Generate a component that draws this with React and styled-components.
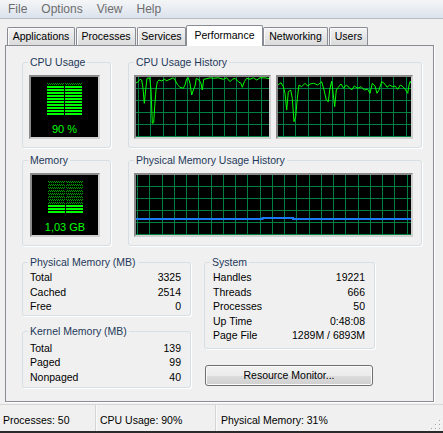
import React from 'react';
import styled, { createGlobalStyle } from 'styled-components';

const GlobalStyle = createGlobalStyle`
  html, body {
    margin: 0;
    padding: 0;
    background: #f0f0f0;
  }
  body {
    font-family: "Liberation Sans", Arial, sans-serif;
    font-size: 10.5px;
    color: #000;
  }
`;

const Window = styled.div`
  width: 443px;
  height: 433px;
  overflow: hidden;
  display: flex;
  flex-direction: column;
  background: #f0f0f0;
  position: relative;
`;

const MenuBar = styled.div`
  height: 18px;
  border-bottom: 1px solid #b6bcc6;
  background: linear-gradient(#f4f5f7, #e8ecf2 55%, #dae2ed);
  display: flex;
  align-items: center;
  padding-left: 1px;
  font-size: 12px;
  color: #6d6d6d;
`;

const MenuItem = styled.span`
  padding: 0 7px;
  line-height: 18px;
`;

const TabStrip = styled.div`
  display: flex;
  align-items: flex-end;
  gap: 1px;
  height: 21px;
  margin-top: 6px;
  padding-left: 7px;
`;

const Tab = styled.div`
  box-sizing: border-box;
  width: ${(p) => p.$w}px;
  height: ${(p) => (p.$active ? 21 : 19)}px;
  margin: 0 ${(p) => (p.$active ? -1 : 0)}px;
  padding-top: ${(p) => (p.$active ? 3 : 2)}px;
  border: 1px solid #898c95;
  border-bottom: none;
  border-radius: 2px 2px 0 0;
  background: ${(p) => (p.$active ? '#fff' : 'linear-gradient(#f3f3f3, #e6e6e6 50%, #dadada)')};
  box-shadow: ${(p) => (p.$active ? 'none' : 'inset 1px 1px 0 #fbfbfb')};
  text-align: center;
  line-height: 13px;
  white-space: nowrap;
  position: ${(p) => (p.$active ? 'relative' : 'static')};
  z-index: ${(p) => (p.$active ? 1 : 'auto')};
`;

const Panel = styled.div`
  box-sizing: border-box;
  width: 429px;
  height: 357px;
  margin: -1px 0 0 5px;
  padding: 9px 11px 0 16px;
  border: 1px solid #898c95;
  box-shadow: 1px 1px 0 #fff;
  background: #f0f0f0;
  display: flex;
  flex-direction: column;
`;

const GraphRow = styled.div`
  display: grid;
  grid-template-columns: 89px 294px;
  column-gap: 17px;
  margin-top: ${(p) => p.$mt || 0}px;
`;

const BottomGrid = styled.div`
  display: grid;
  grid-template-columns: 169px 171px;
  column-gap: 13px;
  align-items: start;
  margin-top: 9px;
`;

const Column = styled.div`
  display: flex;
  flex-direction: column;
  gap: ${(p) => p.$gap || 0}px;
`;

const Group = styled.fieldset`
  margin: 0;
  padding: 0;
  min-width: 0;
  box-sizing: border-box;
  border: 1px solid #d5dfe5;
  border-radius: 3px;
  box-shadow: 1px 1px 0 #fff;
`;

const Caption = styled.legend`
  margin-left: 5px;
  padding: 0 2px;
  line-height: 15px;
  color: #1e395b;
`;

const Content = styled.div`
  padding: ${(p) => p.$pad};
  display: flex;
  flex-direction: ${(p) => (p.$column ? 'column' : 'row')};
  gap: ${(p) => p.$gap || 0}px;
`;

const MeterBox = styled.div`
  width: 71px;
  height: 64px;
  box-sizing: border-box;
  background: #000;
  border: 2px solid;
  border-color: #8a8a8a #d0d0d0 #d0d0d0 #8a8a8a;
  display: flex;
  flex-direction: column;
  align-items: center;
`;

const MeterBars = styled.svg`
  display: block;
  margin-top: 6px;
`;

const MeterText = styled.div`
  margin-top: 7px;
  color: #00ff00;
  font-size: 11px;
  line-height: 13px;
  white-space: nowrap;
`;

const GraphBox = styled.div`
  width: ${(p) => p.$w}px;
  height: 64px;
  box-sizing: border-box;
  background: #000;
  border: 2px solid;
  border-color: #8a8a8a #d0d0d0 #d0d0d0 #8a8a8a;
  svg {
    display: block;
  }
`;

const Row = styled.div`
  display: flex;
  justify-content: space-between;
  height: 14.6px;
  line-height: 14.6px;
  white-space: nowrap;
`;

const ActionButton = styled.button`
  margin: 16px 0 0 1px;
  width: 168px;
  height: 21px;
  box-sizing: border-box;
  padding: 0;
  border: 1px solid #707070;
  border-radius: 3px;
  background: linear-gradient(#f2f2f2, #ebebeb 50%, #dddddd 51%, #cfcfcf);
  box-shadow: inset 0 0 0 1px #fbfbfb;
  font-family: inherit;
  font-size: 10.5px;
  color: #000;
`;

const StatusBar = styled.div`
  margin-top: 2px;
  height: 29px;
  box-sizing: border-box;
  border-top: 1px solid #d7d7d7;
  border-bottom: 2px solid #2a2a2a;
  display: flex;
  position: relative;
  background: #f0f0f0;
`;

const StatusCell = styled.div`
  width: ${(p) => (p.$w ? `${p.$w}px` : 'auto')};
  flex: ${(p) => (p.$w ? 'none' : '1')};
  padding: 9px 0 0 ${(p) => p.$pl}px;
  line-height: 13px;
  box-sizing: border-box;
  border-left: ${(p) => (p.$sep ? '1px solid #d5d5d5' : 'none')};
  box-shadow: ${(p) => (p.$sep ? 'inset 1px 0 0 #fafafa' : 'none')};
  white-space: nowrap;
`;

const Grip = styled.svg`
  position: absolute;
  right: 2px;
  bottom: 1px;
`;

const cpu1 =
  '0,6 2.3,4.7 4,2.3 5.7,3 7,11.3 8.3,26.3 9.7,13 11,1.3 13.7,0.8 15,13 16.3,46.3 17.7,45.7 18.7,29.7 20,13 21.3,4.7 23,3 25.7,4 28.3,2.3 30.7,3.7 34,2.3 37.3,0.8 39,3 41.7,8 44,10.3 47.3,11.3 49,8 50.7,1.7 52.3,0.8 54,6.3 55.7,18 57.3,13 59,9 60.3,1.3 63,3 65,6.3 66.3,13 67.7,2.3 70.7,1.7 74,0.8 77.3,1.3 82.3,0.8 87.3,2.3 90.7,0.8 94,4.7 96.3,2.3 99,1.3 102.3,4.7 105,6.3 106.3,10.3 108.3,4.7 110.7,1.3 114,2.3 117.3,0.8 120.7,3 124,0.8 129,0.8 133,1.7';

const cpu2 =
  '0,8 3,5.7 5.3,9.7 7,16.3 8.7,33 10.3,14.7 12.7,13 14.3,21.3 16,44.7 17.7,39.7 19.3,21.3 21,8 23.7,9.7 27,6.3 29.7,9 32.3,7 35.7,6.3 39.7,8 43.7,4.7 46,13 48.3,23 50.3,24.7 51.7,13 53.7,4.3 55.3,18 56.7,29.7 58.3,13 60.3,10.3 63,7 65.7,11.3 68.3,8 71,10.3 73.7,13 76.3,9 79.7,11.3 83,9.7 86.3,13 89.7,12.3 92,16.3 94.3,6.3 97,9 99,16.3 101,13 103.7,4.7 106.3,6.3 109,10.3 111.7,8 114.3,9.7 117,9 119.7,12.3 122.3,8 125,9.7 127.7,13 129.7,16.3 131,8 132.3,4.3 133,6.3';

function Grid({ w, h, offset }) {
  const lines = [];
  for (let k = 0; k < 40; k++) {
    const x = Math.round(offset + k * 12.25) + 0.5;
    if (x > w) break;
    lines.push(<line key={`v${k}`} x1={x} y1={0} x2={x} y2={h} />);
  }
  for (let k = 0; k < 5; k++) {
    const y = 11.5 + 12 * k;
    lines.push(<line key={`h${k}`} x1={0} y1={y} x2={w} y2={y} />);
  }
  return (
    <g stroke="#008040" strokeWidth="1">
      {lines}
    </g>
  );
}

function Graph({ w, offset, children }) {
  const iw = w - 4;
  return (
    <GraphBox $w={w}>
      <svg width={iw} height="60" viewBox={`0 0 ${iw} 60`}>
        <Grid w={iw} h={60} offset={offset} />
        {children}
      </svg>
    </GraphBox>
  );
}

function Meter({ id, lit, label }) {
  const rows = Array.from({ length: 11 }, (_, i) => i);
  return (
    <MeterBox>
      <MeterBars width="35" height="33" viewBox="0 0 35 33">
        <defs>
          <pattern id={id} width="2" height="2" patternUnits="userSpaceOnUse">
            <rect x="0" y="0" width="1" height="1" fill="#00a000" />
            <rect x="1" y="1" width="1" height="1" fill="#00a000" />
          </pattern>
        </defs>
        {rows.map((i) => {
          const fill = i >= 11 - lit ? '#00ff00' : `url(#${id})`;
          return (
            <g key={i}>
              <rect x="0" y={i * 3} width="17" height="2" fill={fill} />
              <rect x="18" y={i * 3} width="17" height="2" fill={fill} />
            </g>
          );
        })}
      </MeterBars>
      <MeterText>{label}</MeterText>
    </MeterBox>
  );
}

function Stats({ items }) {
  return items.map(([label, value]) => (
    <Row key={label}>
      <span>{label}</span>
      <span>{value}</span>
    </Row>
  ));
}

const tabs = [
  ['Applications', 68],
  ['Processes', 60],
  ['Services', 49],
  ['Performance', 77, true],
  ['Networking', 65],
  ['Users', 39],
];

export default function App() {
  return (
    <Window>
      <GlobalStyle />
      <MenuBar>
        <MenuItem>File</MenuItem>
        <MenuItem>Options</MenuItem>
        <MenuItem>View</MenuItem>
        <MenuItem>Help</MenuItem>
      </MenuBar>

      <TabStrip>
        {tabs.map(([label, w, active]) => (
          <Tab key={label} $w={w} $active={active}>
            {label}
          </Tab>
        ))}
      </TabStrip>

      <Panel>
        <GraphRow>
          <Group>
            <Caption>CPU Usage</Caption>
            <Content $pad="5px 10px 8px 6px">
              <Meter id="cpu-dots" lit={10} label="90 %" />
            </Content>
          </Group>
          <Group>
            <Caption>CPU Usage History</Caption>
            <Content $pad="5px 8px 8px 5px" $gap={5}>
              <Graph w={137} offset={2}>
                <polyline points={cpu1} fill="none" stroke="#00ff00" strokeWidth="1" />
              </Graph>
              <Graph w={137} offset={5}>
                <polyline points={cpu2} fill="none" stroke="#00ff00" strokeWidth="1" />
              </Graph>
            </Content>
          </Group>
        </GraphRow>

        <GraphRow $mt={5}>
          <Group>
            <Caption>Memory</Caption>
            <Content $pad="5px 10px 8px 7px">
              <Meter id="mem-dots" lit={3} label="1,03 GB" />
            </Content>
          </Group>
          <Group>
            <Caption>Physical Memory Usage History</Caption>
            <Content $pad="5px 8px 8px 5px">
              <Graph w={279} offset={1}>
                <path d="M0 44 H126.5 V43 H157 V44 H275" fill="none" stroke="#1a78f5" strokeWidth="2" />
              </Graph>
            </Content>
          </Group>
        </GraphRow>

        <BottomGrid>
          <Column $gap={8}>
            <Group>
              <Caption>Physical Memory (MB)</Caption>
              <Content $pad="0 9px 1px 7px" $column>
                <Stats
                  items={[
                    ['Total', '3325'],
                    ['Cached', '2514'],
                    ['Free', '0'],
                  ]}
                />
              </Content>
            </Group>
            <Group>
              <Caption>Kernel Memory (MB)</Caption>
              <Content $pad="2px 9px 2px 7px" $column>
                <Stats
                  items={[
                    ['Total', '139'],
                    ['Paged', '99'],
                    ['Nonpaged', '40'],
                  ]}
                />
              </Content>
            </Group>
          </Column>
          <Column>
            <Group>
              <Caption>System</Caption>
              <Content $pad="0 9px 5px 8px" $column>
                <Stats
                  items={[
                    ['Handles', '19221'],
                    ['Threads', '666'],
                    ['Processes', '50'],
                    ['Up Time', '0:48:08'],
                    ['Page File', '1289M / 6893M'],
                  ]}
                />
              </Content>
            </Group>
            <ActionButton>Resource Monitor...</ActionButton>
          </Column>
        </BottomGrid>
      </Panel>

      <StatusBar>
        <StatusCell $w={95} $pl={3}>Processes: 50</StatusCell>
        <StatusCell $w={120} $pl={4} $sep>CPU Usage: 90%</StatusCell>
        <StatusCell $pl={5} $sep>Physical Memory: 31%</StatusCell>
        <Grip width="10" height="10" viewBox="0 0 10 10">
          {[
            [8, 0],
            [8, 4],
            [4, 4],
            [8, 8],
            [4, 8],
            [0, 8],
          ].map(([x, y]) => (
            <g key={`${x}-${y}`}>
              <rect x={x + 1} y={y + 1} width="1" height="1" fill="#fff" />
              <rect x={x} y={y} width="1" height="1" fill="#a8a8a8" />
            </g>
          ))}
        </Grip>
      </StatusBar>
    </Window>
  );
}
